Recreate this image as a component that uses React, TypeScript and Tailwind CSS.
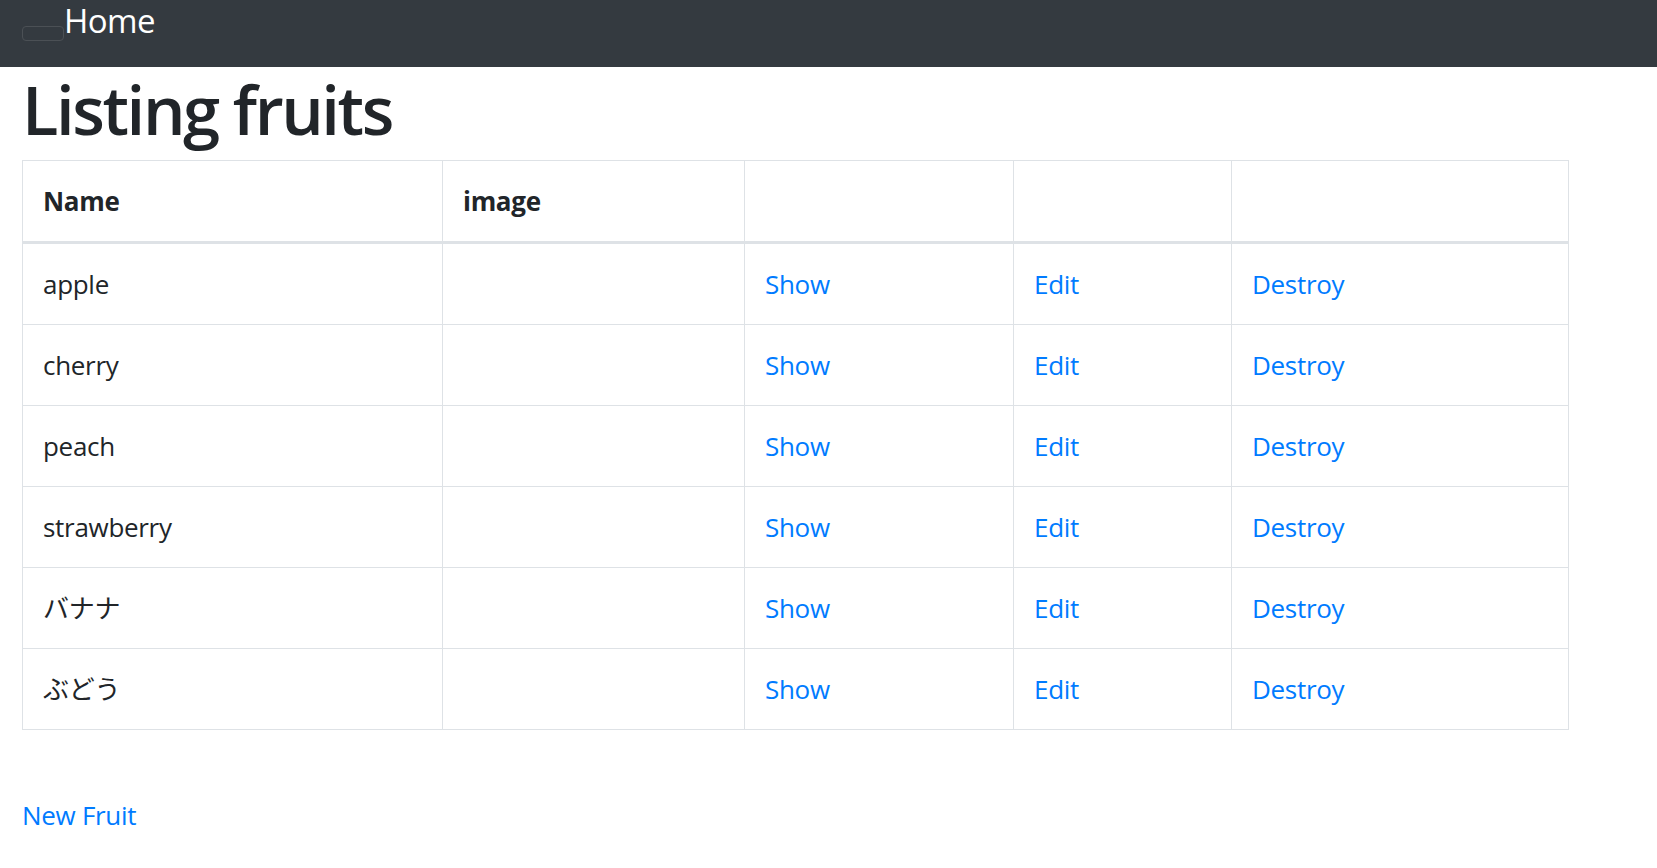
import React from 'react';

const fruits = ['apple', 'cherry', 'peach', 'strawberry', 'バナナ', 'ぶどう'];

const cell = 'flex items-center pl-[20px] border-r border-b border-[#dee2e6]';

const App: React.FC = () => {
  return (
    <div className="min-h-screen bg-white text-[#212529] font-['Segoe_UI','Open_Sans','Noto_Sans_CJK_JP',sans-serif]">
      <nav className="bg-[#343a40] h-[67px] flex items-start pl-[22px]">
        <button className="mt-[26px] w-[42px] h-[15px] border border-[#4b5055] rounded-[4px]"></button>
        <a href="#" className="mt-[4px] text-white text-[33px] leading-[34px] tracking-[-0.6px]">
          Home
        </a>
      </nav>

      <div className="px-[22px]">
        <h1 className="mt-[8px] text-[67px] leading-[68px] font-semibold tracking-[-2.4px]">Listing fruits</h1>

        <div className="mt-[17px] w-[1547px] grid grid-cols-[420px_302px_269px_218px_337px] border-l border-t border-[#dee2e6] text-[26px] tracking-[-0.3px]">
          <div className={`${cell} h-[83px] border-b-[3px] font-bold`}>Name</div>
          <div className={`${cell} h-[83px] border-b-[3px] font-bold`}>image</div>
          <div className={`${cell} h-[83px] border-b-[3px]`}></div>
          <div className={`${cell} h-[83px] border-b-[3px]`}></div>
          <div className={`${cell} h-[83px] border-b-[3px]`}></div>

          {fruits.map((f) => (
            <React.Fragment key={f}>
              <div className={`${cell} h-[81px]`}>{f}</div>
              <div className={`${cell} h-[81px]`}></div>
              <div className={`${cell} h-[81px]`}>
                <a href="#" className="text-[#007bff]">Show</a>
              </div>
              <div className={`${cell} h-[81px]`}>
                <a href="#" className="text-[#007bff]">Edit</a>
              </div>
              <div className={`${cell} h-[81px]`}>
                <a href="#" className="text-[#007bff]">Destroy</a>
              </div>
            </React.Fragment>
          ))}
        </div>

        <div className="mt-[65px] text-[26px] leading-[40px] tracking-[-0.3px]">
          <a href="#" className="text-[#007bff]">New Fruit</a>
        </div>
      </div>
    </div>
  );
};

export default App;
